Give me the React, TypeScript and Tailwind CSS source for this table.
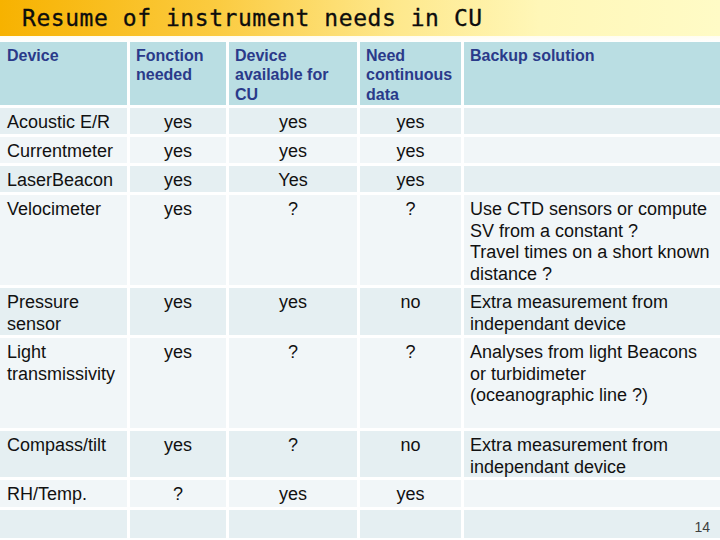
import React from "react";

const dark = "bg-[#e5eff2]";
const light = "bg-[#f1f6f8]";

type Row = { cells: string[][]; bg: string };

const rows: Row[] = [
  { cells: [["Acoustic E/R"], ["yes"], ["yes"], ["yes"], []], bg: dark },
  { cells: [["Currentmeter"], ["yes"], ["yes"], ["yes"], []], bg: light },
  { cells: [["LaserBeacon"], ["yes"], ["Yes"], ["yes"], []], bg: dark },
  {
    cells: [
      ["Velocimeter"],
      ["yes"],
      ["?"],
      ["?"],
      ["Use CTD sensors or compute", "SV from a constant ?", "Travel times on a short known", "distance ?"],
    ],
    bg: light,
  },
  {
    cells: [["Pressure", "sensor"], ["yes"], ["yes"], ["no"], ["Extra measurement from", "independant device"]],
    bg: dark,
  },
  {
    cells: [
      ["Light", "transmissivity"],
      ["yes"],
      ["?"],
      ["?"],
      ["Analyses from light Beacons", "or turbidimeter", "(oceanographic line ?)"],
    ],
    bg: light,
  },
  {
    cells: [["Compass/tilt"], ["yes"], ["?"], ["no"], ["Extra measurement from", "independant device"]],
    bg: dark,
  },
  { cells: [["RH/Temp."], ["?"], ["yes"], ["yes"], []], bg: light },
  { cells: [[], [], [], [], []], bg: dark },
];

const headers = [
  ["Device"],
  ["Fonction", "needed"],
  ["Device", "available for", "CU"],
  ["Need", "continuous", "data"],
  ["Backup solution"],
];

export default function App() {
  return (
    <div
      className="w-[720px] h-[540px] bg-white overflow-hidden"
      style={{ fontFamily: '"Liberation Sans", Arial, sans-serif' }}
    >
      <div className="h-[36px] bg-[linear-gradient(to_right,#f7b200_0%,#fbcb40_30%,#fee88c_55%,#fff7b8_75%,#fffbc6_100%)] pl-[22px] pt-[1px]">
        <div
          className="text-[23px] leading-[34px] tracking-[0.55px] text-[#0d0d0d]"
          style={{ fontFamily: '"DejaVu Sans Mono", "Liberation Mono", monospace', WebkitTextStroke: "0.3px #0d0d0d" }}
        >
          Resume of instrument needs in CU
        </div>
      </div>
      <div className="h-[6px] bg-[linear-gradient(to_bottom,#fffdf0,#ffffff)]" />
      <div className="grid grid-cols-[127px_96px_128px_101px_1fr] grid-rows-[63px_26px_26px_26px_90px_47px_90px_46px_27px_28px] gap-[3px]">
        {headers.map((h, i) => (
          <div
            key={"h" + i}
            className={`bg-[#badee3] pt-[4px] ${i === 0 ? "pl-[7px]" : "pl-[6px]"} text-[16px] leading-[19.3px] font-bold text-[#2a3a8a]`}
          >
            {h.map((l, j) => (
              <div key={j}>{l}</div>
            ))}
          </div>
        ))}
        {rows.map((r, ri) =>
          r.cells.map((c, ci) => {
            const center = ci >= 1 && ci <= 3;
            const isLast = ri === rows.length - 1 && ci === 4;
            return (
              <div
                key={ri + "-" + ci}
                className={`${r.bg} pt-[4px] text-[18px] leading-[21.7px] text-[#111] ${
                  center ? "text-center" : ci === 0 ? "pl-[7px]" : "pl-[6px]"
                } ${isLast ? "flex items-end justify-end pr-[10px] pb-[3px]" : ""}`}
              >
                {isLast ? (
                  <span className="text-[14px] leading-[16px] text-[#404040]">14</span>
                ) : (
                  c.map((l, j) => <div key={j}>{l}</div>)
                )}
              </div>
            );
          })
        )}
      </div>
    </div>
  );
}
